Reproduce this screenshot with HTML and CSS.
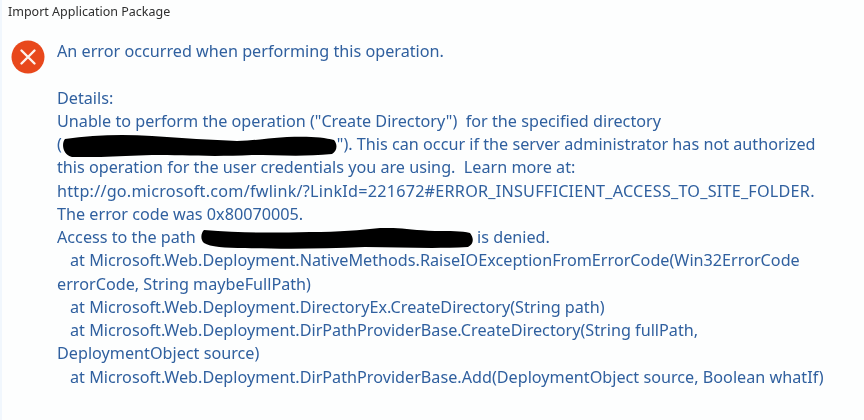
FILE: index.html
```html
<!DOCTYPE html>
<html lang="en">
<head>
    <meta charset="UTF-8">
    <meta name="viewport" content="width=device-width, initial-scale=1.0">
    <title>Import Application Package</title>
    <link rel="stylesheet" href="styles.css">
</head>
<body>

<div class="dialog">
    <div class="dialog-title">Import Application Package</div>

    <div class="dialog-body">
        <svg class="error-icon" width="34" height="34" viewBox="0 0 34 34">
            <circle cx="17" cy="17" r="16.5" fill="#e8481c"/>
            <path d="M10.5 10.5 L23.5 23.5 M23.5 10.5 L10.5 23.5" stroke="#fdf3ee" stroke-width="2.4" stroke-linecap="round"/>
        </svg>

        <div class="message">
            <p class="line">An error occurred when performing this operation.</p>
            <p class="line">&nbsp;</p>
            <p class="line">Details:</p>
            <p class="line">Unable to perform the operation ("Create Directory")&nbsp; for the specified directory</p>
            <p class="line">(<svg class="redact" width="275" height="22" viewBox="0 0 275 22"><path d="M3 4 C30 0 60 -1 90 1 C120 3 150 5 175 6 C190 6 205 3 225 2 C245 1 262 2 272 5 C276 10 275 16 270 19 C240 22 215 20 190 20 C150 22 120 20 90 20 C60 21 30 23 10 22 C1 20 -1 9 3 4 Z" fill="#000"/></svg>"). This can occur if the server administrator has not authorized</p>
            <p class="line">this operation for the user credentials you are using.&nbsp; Learn more at:</p>
            <p class="line wide">http://go.microsoft.com/fwlink/?LinkId=221672#ERROR_INSUFFICIENT_ACCESS_TO_SITE_FOLDER.</p>
            <p class="line">The error code was 0x80070005.</p>
            <p class="line">Access to the path <svg class="redact" width="273" height="21" viewBox="0 0 273 21"><path d="M4 2 C40 5 70 5 110 4 C140 4 160 2 180 0 C195 -1 210 2 235 3 C250 3 262 3 270 5 C274 10 274 16 268 19 C230 21 200 19 165 19 C120 21 80 21 45 20 C25 20 10 19 4 15 C0 11 1 5 4 2 Z" fill="#000"/></svg> is denied.</p>
            <p class="line indent">at Microsoft.Web.Deployment.NativeMethods.RaiseIOExceptionFromErrorCode(Win32ErrorCode</p>
            <p class="line">errorCode, String maybeFullPath)</p>
            <p class="line indent">at Microsoft.Web.Deployment.DirectoryEx.CreateDirectory(String path)</p>
            <p class="line indent">at Microsoft.Web.Deployment.DirPathProviderBase.CreateDirectory(String fullPath,</p>
            <p class="line">DeploymentObject source)</p>
            <p class="line indent">at Microsoft.Web.Deployment.DirPathProviderBase.Add(DeploymentObject source, Boolean whatIf)</p>
        </div>
    </div>
</div>

</body>
</html>
```

FILE: styles.css
```css
html, body {
    margin: 0;
    height: 100%;
    background-color: #fdfefe;
    overflow: hidden;
}
.dialog {
    height: 420px;
    box-sizing: border-box;
    border-left: 2px solid #f1f7fd;
    padding: 4px 0 0 6px;
    font-family: "Noto Sans", "Open Sans", sans-serif;
    filter: blur(0.45px);
}
.dialog-title {
    font-size: 12.5px;
    line-height: 16px;
    color: #2e2e2e;
}
.dialog-body {
    display: flex;
    align-items: flex-start;
    gap: 12px;
    margin-top: 20px;
    padding-left: 3px;
}
.error-icon {
    flex: none;
}
.message {
    font-size: 16.2px;
    color: #30609f;
    white-space: nowrap;
}
.line {
    margin: 0;
    height: 23.25px;
    line-height: 23.25px;
}
.indent {
    padding-left: 13px;
}
.wide {
    letter-spacing: 0.23px;
}
.redact {
    vertical-align: middle;
    margin-top: -4px;
    margin-bottom: -4px;
}
```
